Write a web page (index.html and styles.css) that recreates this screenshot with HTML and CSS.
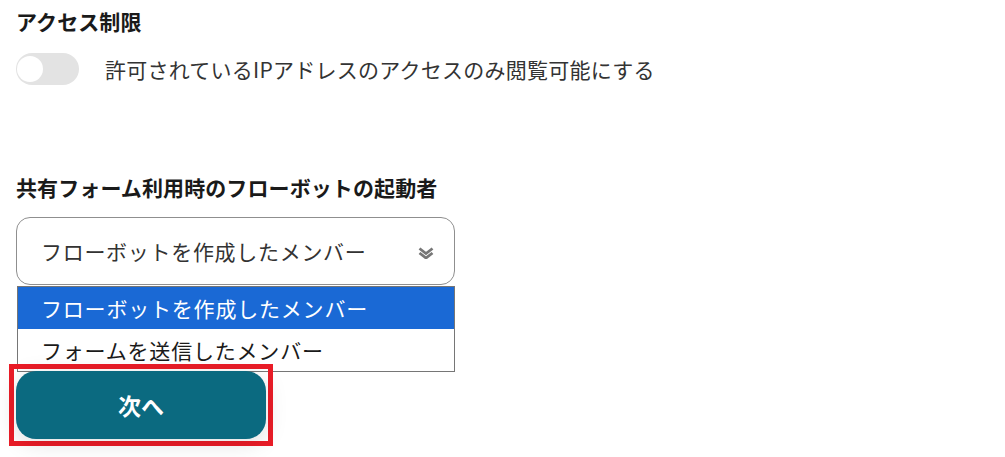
FILE: index.html
```html
<!DOCTYPE html>
<html lang="ja">
<head>
<meta charset="utf-8">
<link rel="stylesheet" href="styles.css">
</head>
<body>
<div class="page">
  <section class="block">
    <h2 class="heading">アクセス制限</h2>
    <div class="toggle-row">
      <span class="toggle"><span class="knob"></span></span>
      <span class="toggle-label">許可されているIPアドレスのアクセスのみ閲覧可能にする</span>
    </div>
  </section>
  <section class="block block-launch">
    <h2 class="heading">共有フォーム利用時のフローボットの起動者</h2>
    <div class="select-wrap">
      <div class="select">
        <span class="select-value">フローボットを作成したメンバー</span>
        <svg class="chevron" width="16" height="12" viewBox="0 0 16 12">
          <path d="M1.5 1.5 L8 6.5 L14.5 1.5" fill="none" stroke="#777" stroke-width="2.8"/>
          <path d="M1.5 6 L8 11 L14.5 6" fill="none" stroke="#777" stroke-width="2.8"/>
        </svg>
      </div>
      <ul class="options">
        <li class="option option-active">フローボットを作成したメンバー</li>
        <li class="option">フォームを送信したメンバー</li>
      </ul>
    </div>
    <div class="btn-frame">
      <button class="btn-next">次へ</button>
    </div>
  </section>
</div>
</body>
</html>
```

FILE: styles.css
```css
* { box-sizing: border-box; }
html, body { margin: 0; padding: 0; background: #fff; }
body {
  font-family: "Noto Sans CJK JP", "Noto Sans", sans-serif;
  color: #333;
}
.page {
  padding: 6px 0 0 16px;
  width: 1005px;
  height: 457px;
  overflow: hidden;
}
.heading {
  margin: 0;
  font-size: 21px;
  font-weight: 700;
  line-height: 30px;
  color: #1a1a1a;
  letter-spacing: 0.1px;
}
.toggle-row {
  display: flex;
  align-items: center;
  margin-top: 17px;
  gap: 26px;
}
.toggle {
  display: flex;
  align-items: center;
  width: 63px;
  height: 32px;
  border-radius: 16px;
  background: #e3e3e3;
  padding: 0 3px 0 1px;
}
.knob {
  width: 26px;
  height: 26px;
  border-radius: 50%;
  background: #fff;
}
.toggle-label {
  font-size: 21px;
  line-height: 30px;
  color: #333;
  letter-spacing: 0.25px;
}
.block-launch { margin-top: 87px; }
.select-wrap { width: 439px; margin-top: 15px; }
.select {
  display: flex;
  align-items: center;
  justify-content: space-between;
  height: 68px;
  border: 1px solid #8f8f8f;
  border-radius: 14px;
  padding: 0 20px 0 24px;
  font-size: 21px;
  color: #333;
}
.select-value { letter-spacing: 0.7px; }
.chevron { margin-top: 4px; }
.options {
  list-style: none;
  margin: 1px 0 0 1px;
  padding: 0;
  width: 438px;
  border: 1px solid #767676;
}
.option {
  height: 42px;
  line-height: 42px;
  padding-left: 23px;
  font-size: 21px;
  color: #1a1a1a;
  letter-spacing: 0.8px;
}
.option-active {
  background: #1a69d5;
  color: #fff;
}
.option + .option { line-height: 43px; }
.btn-frame {
  margin: -8px 0 0 -7px;
  width: 264px;
  height: 82px;
  border: 5px solid #ea1c27;
  padding: 2px;
}
.btn-next {
  display: block;
  width: 250px;
  height: 68px;
  border: none;
  border-radius: 20px;
  background: #0b6a80;
  color: #fff;
  font-family: "Noto Sans CJK JP", "Noto Sans", sans-serif;
  font-size: 23px;
  font-weight: 700;
  box-shadow: 0 4px 22px rgba(0,0,0,0.13);
}
```
